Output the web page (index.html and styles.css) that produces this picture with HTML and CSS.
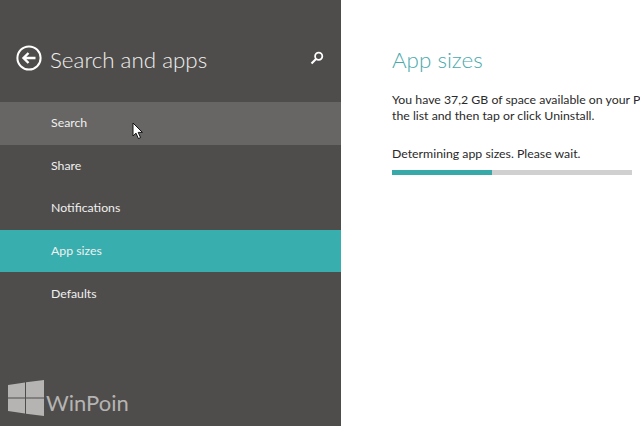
FILE: index.html
```html
<!DOCTYPE html>
<html lang="en">
<head>
    <meta charset="UTF-8">
    <title>Search and apps</title>
    <link rel="stylesheet" href="styles.css">
</head>
<body>
    <div class="screen">
        <div class="sidebar">
            <div class="side-header">
                <svg class="back-icon" width="26" height="26" viewBox="0 0 26 26">
                    <circle cx="13" cy="13" r="11.6" fill="none" stroke="#fff" stroke-width="2"/>
                    <path d="M19.5 13H8M12.5 8L7.5 13l5 5" fill="none" stroke="#fff" stroke-width="2.4"/>
                </svg>
                <div class="side-title">Search and apps</div>
                <svg class="search-icon" width="14" height="14" viewBox="0 0 14 14">
                    <circle cx="8.7" cy="5.3" r="3.6" fill="none" stroke="#fff" stroke-width="1.8"/>
                    <path d="M6 8L1.5 12.5" fill="none" stroke="#fff" stroke-width="2.2"/>
                </svg>
            </div>
            <div class="nav">
                <div class="nav-item hover">Search</div>
                <div class="nav-item">Share</div>
                <div class="nav-item">Notifications</div>
                <div class="nav-item active">App sizes</div>
                <div class="nav-item">Defaults</div>
            </div>
            <svg class="cursor" width="12" height="18" viewBox="0 0 12 18">
                <path d="M1 1V14L4 11.2 6.4 16.6 8.6 15.6 6.2 10.4H10.4Z" fill="#fff" stroke="#111" stroke-width="1"/>
            </svg>
            <div class="watermark">
                <svg width="36" height="36" viewBox="0 0 36 36">
                    <path d="M0 5L17 2.500V17.500H0ZM18 2.300L36 0V17.500H18ZM0 18.500H17V33.500L0 31ZM18 18.500H36V36L18 33.700Z" fill="#b5b4b3"/>
                </svg>
                <span class="wm-text">WinPoin</span>
            </div>
        </div>
        <div class="main">
            <div class="main-title">App sizes</div>
            <p class="desc">You have 37,2 GB of space available on your PC. To remove an app, select it in<br>the list and then tap or click Uninstall.</p>
            <div class="wait">Determining app sizes. Please wait.</div>
            <div class="progress"><div class="progress-fill"></div></div>
        </div>
    </div>
</body>
</html>
```

FILE: styles.css
```css
* { margin: 0; padding: 0; box-sizing: border-box; }
html, body { width: 640px; height: 426px; overflow: hidden; }
body { font-family: "Lato", "Open Sans", sans-serif; background: #fff; }

.screen { display: flex; width: 640px; height: 426px; }

.sidebar { position: relative; width: 341px; flex: none; background: #4f4d4b; color: #fff; }
.side-header { display: flex; align-items: center; height: 102px; padding: 16px 17px 0 16px; }
.back-icon { flex: none; margin-top: -2px; margin-right: 8px; }
.side-title { flex: 1; font-size: 22.4px; font-weight: 300; color: #f0f0f0; }
.search-icon { flex: none; margin-top: -2px; }

.nav-item { display: flex; align-items: center; height: 42.6px; padding: 0 0 1px 51px; font-size: 12.3px; color: #f0f0f0; }
.nav-item.hover { background: #676664; }
.nav-item.active { background: #38aeae; }

.cursor { position: absolute; left: 132px; top: 122px; }

.watermark { position: absolute; left: 8px; top: 380px; display: flex; align-items: center; gap: 2px; color: #b5b4b3; }
.wm-text { font-size: 22px; margin-top: 8px; }

.main { flex: 1; min-width: 0; padding: 46px 0 0 51px; overflow: hidden; }
.main-title { font-size: 22.4px; line-height: 27px; font-weight: 300; color: #4aa9ad; margin-bottom: 19px; }
.desc { font-size: 12.3px; line-height: 16px; color: #2a2a2a; white-space: nowrap; margin-bottom: 22px; }
.wait { font-size: 12.3px; line-height: 16px; color: #2a2a2a; margin-bottom: 8px; }
.progress { width: 240px; height: 5px; background: #d0d0d0; }
.progress-fill { width: 100px; height: 100%; background: #38a9a9; }
```
